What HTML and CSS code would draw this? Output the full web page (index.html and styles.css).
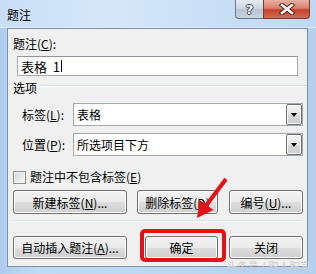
FILE: index.html
```html
<!DOCTYPE html>
<html lang="zh-CN">
<head>
    <meta charset="UTF-8">
    <title>题注</title>
    <link rel="stylesheet" href="styles.css">
</head>
<body>
    <div class="window">
        <div class="titlebar">
            <span class="title">题注</span>
            <div class="caption-buttons">
                <span class="cap help">?</span>
                <span class="cap close">
                    <svg width="16" height="12" viewBox="0 0 16 12">
                        <path d="M3 2 L13 10 M13 2 L3 10" stroke="#4a2018" stroke-width="4.4" stroke-linecap="square"/>
                        <path d="M3 2 L13 10 M13 2 L3 10" stroke="#ffffff" stroke-width="2.6" stroke-linecap="square"/>
                    </svg>
                </span>
            </div>
        </div>

        <div class="client">
            <div class="label">题注(<u>C</u>):</div>
            <div class="textbox">表格&nbsp;&nbsp;1<span class="caret"></span></div>

            <div class="group-title">
                <span>选项</span>
                <span class="rule"></span>
            </div>

            <div class="field">
                <span class="field-label">标签(<u>L</u>):</span>
                <div class="combo">
                    <span class="combo-text">表格</span>
                    <span class="combo-btn"><span class="arrow"></span></span>
                </div>
            </div>
            <div class="field">
                <span class="field-label">位置(<u>P</u>):</span>
                <div class="combo">
                    <span class="combo-text">所选项目下方</span>
                    <span class="combo-btn"><span class="arrow"></span></span>
                </div>
            </div>

            <div class="check">
                <span class="box"></span>
                <span>题注中不包含标签(<u>E</u>)</span>
            </div>

            <div class="btn-row first">
                <button class="btn wide">新建标签(<u>N</u>)...</button>
                <button class="btn del">删除标签(<u>D</u>)</button>
                <button class="btn last">编号(<u>U</u>)...</button>
            </div>

            <div class="sep"></div>

            <div class="btn-row second">
                <button class="btn wide">自动插入题注(<u>A</u>)...</button>
                <button class="btn ok">确定</button>
                <button class="btn last">关闭</button>
            </div>
        </div>

        <div class="watermark">头条号 / 职人职言</div>

        <!-- red markup drawn on top of the dialog -->
        <svg class="markup" width="316" height="274" viewBox="0 0 316 274">
            <rect x="142" y="231" width="82" height="29" rx="3" fill="none" stroke="#e3121a" stroke-width="4"/>
            <line x1="226" y1="179" x2="205" y2="207" stroke="#e3121a" stroke-width="4"/>
            <polygon points="197,218 199.5,200 213.5,210" fill="#e3121a"/>
        </svg>
    </div>
</body>
</html>
```

FILE: styles.css
```css
body {
    margin: 0;
    padding: 0;
    font-family: "Noto Sans CJK SC", "Liberation Sans", sans-serif;
    font-size: 12px;
    color: #000;
}
.window {
    position: relative;
    width: 316px;
    height: 274px;
    overflow: hidden;
    background: linear-gradient(to right, #aecdee 0%, #c2dbf4 12%, #bcd6f1 60%, #b4d0ef 100%);
}
.titlebar {
    display: flex;
    justify-content: space-between;
    height: 28px;
    padding-left: 7px;
    box-sizing: border-box;
    background: linear-gradient(to right, #c9def5 0%, #d6e7f8 35%, #c8def5 70%, #c0d8f2 100%);
    border-bottom: 1px solid #dceaf8;
}
.title {
    margin-top: 7px;
    line-height: 16px;
}
.caption-buttons {
    display: flex;
    margin-right: 6px;
    height: 19px;
}
.cap {
    display: flex;
    align-items: center;
    justify-content: center;
    height: 19px;
    box-sizing: border-box;
    border: 1px solid #6c7a8c;
    border-top: none;
}
.help {
    width: 28px;
    border-right: none;
    border-bottom-left-radius: 4px;
    background: linear-gradient(to bottom, #e4ebf2 0%, #cbd5e0 50%, #b7c4d3 51%, #c8d3df 100%);
    color: #fff;
    font-family: "DejaVu Sans", sans-serif;
    font-weight: bold;
    font-size: 13px;
    text-shadow: 1px 0 #3c4656, -1px 0 #3c4656, 0 1px #3c4656, 0 -1px #3c4656;
}
.close {
    width: 47px;
    border-color: #7b3a30;
    border-bottom-right-radius: 4px;
    background: linear-gradient(to bottom, #eab0a3 0%, #d9826f 45%, #c5412b 55%, #d56a52 100%);
}
.client {
    margin-left: 7px;
    width: 301px;
    height: 239px;
    box-sizing: border-box;
    border: 1px solid #7f91a6;
    background-color: #f0f0f0;
    padding: 7px 4px 0 5px;
}
.label {
    line-height: 16px;
}
.textbox {
    display: flex;
    align-items: center;
    margin: 4px 5px 0 4px;
    height: 20px;
    box-sizing: border-box;
    border: 1px solid #a7adb5;
    border-top-color: #8e949c;
    background-color: #fff;
    padding-left: 3px;
    font-size: 13px;
}
.caret {
    display: inline-block;
    width: 1px;
    height: 12px;
    margin-left: 1px;
    background-color: #000;
}
.group-title {
    display: flex;
    align-items: center;
    margin-top: 4px;
    margin-right: -4px;
    line-height: 16px;
}
.rule {
    flex: 1;
    height: 1px;
    margin-left: 3px;
    margin-top: -4px;
    background-color: #d5dfe5;
    border-bottom: 1px solid #fff;
}
.field {
    display: flex;
    align-items: center;
    margin-top: 7px;
    height: 23px;
}
.field-label {
    width: 51px;
    padding-left: 9px;
}
.combo {
    flex: 1;
    display: flex;
    height: 23px;
    box-sizing: border-box;
    border: 1px solid #a3a9b1;
    background-color: #fff;
}
.combo-text {
    flex: 1;
    line-height: 21px;
    padding-left: 3px;
}
.combo-btn {
    display: flex;
    align-items: center;
    justify-content: center;
    width: 16px;
    box-sizing: border-box;
    border: 1px solid #6f6f6f;
    border-radius: 2px;
    background: linear-gradient(to bottom, #f3f3f3 0%, #e6e6e6 50%, #d9d9d9 51%, #cdcdcd 100%);
    box-shadow: inset 0 0 0 1px #f8f8f8;
}
.arrow {
    width: 0;
    height: 0;
    border-left: 3.5px solid transparent;
    border-right: 3.5px solid transparent;
    border-top: 4px solid #000;
}
.check {
    display: flex;
    align-items: center;
    gap: 4px;
    margin-top: 13px;
    line-height: 16px;
}
.box {
    width: 13px;
    height: 13px;
    box-sizing: border-box;
    border: 1px solid #8e8f8f;
    background: linear-gradient(135deg, #d9d9d9 0%, #f6f6f6 100%);
    box-shadow: inset 0 0 0 1px #f4f4f4;
}
.btn-row {
    display: flex;
}
.btn-row.first {
    margin-top: 5px;
}
.btn-row.second {
    margin-top: 14px;
}
.btn {
    height: 24px;
    padding: 0;
    font-family: inherit;
    font-size: 12px;
    color: #000;
    border: 1px solid #707070;
    border-radius: 3px;
    background: linear-gradient(to bottom, #f2f2f2 0%, #ebebeb 50%, #dddddd 51%, #cfcfcf 100%);
    box-shadow: inset 0 0 0 1px #fbfbfb;
}
.second .btn {
    height: 23px;
}
.btn.wide {
    width: 114px;
}
.btn.del {
    width: 81px;
    margin-left: 10px;
}
.btn.ok {
    width: 73px;
    margin-left: 18px;
}
.btn.last {
    width: 74px;
    margin-left: 11px;
}
.sep {
    margin-top: 6px;
    height: 1px;
    background-color: #d5dfe5;
    border-bottom: 1px solid #fff;
}
.watermark {
    position: absolute;
    left: 227px;
    bottom: 2px;
    font-size: 10px;
    line-height: 12px;
    color: #c9ccd0;
    letter-spacing: 0.5px;
}
.markup {
    position: absolute;
    top: 0;
    left: 0;
    pointer-events: none;
}
```
